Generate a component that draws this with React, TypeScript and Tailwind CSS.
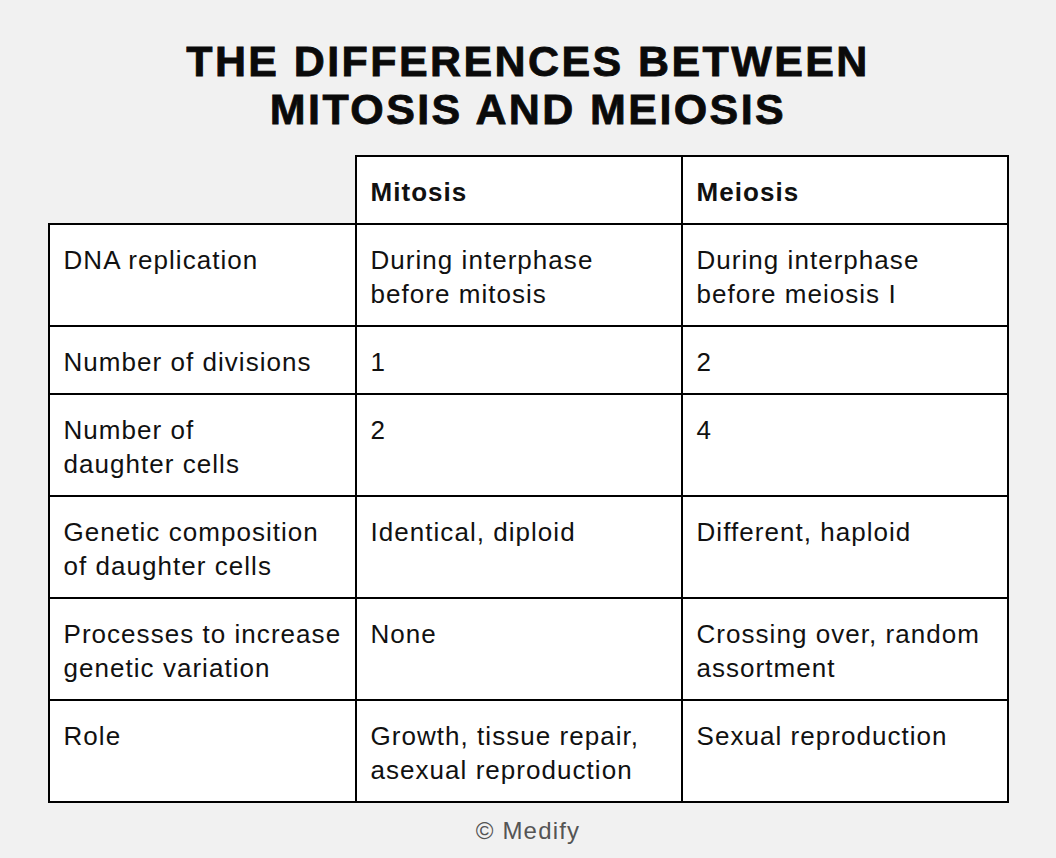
const rows: string[][][] = [
  [['DNA replication'], ['During interphase', 'before mitosis'], ['During interphase', 'before meiosis I']],
  [['Number of divisions'], ['1'], ['2']],
  [['Number of', 'daughter cells'], ['2'], ['4']],
  [['Genetic composition', 'of daughter cells'], ['Identical, diploid'], ['Different, haploid']],
  [['Processes to increase', 'genetic variation'], ['None'], ['Crossing over, random', 'assortment']],
  [['Role'], ['Growth, tissue repair,', 'asexual reproduction'], ['Sexual reproduction']],
];

const rowHeights = ['h-[102px]', 'h-[68px]', 'h-[102px]', 'h-[102px]', 'h-[102px]', 'h-[104px]'];

function Cell({ lines, col, last, height }: { lines: string[]; col: number; last: boolean; height: string }) {
  return (
    <div
      className={`${height} border-l-2 border-t-2 border-black bg-white pl-[14px] pt-[18px] whitespace-nowrap ${col === 2 ? 'border-r-2' : ''} ${last ? 'border-b-2' : ''}`}
    >
      {lines.map((line, i) => (
        <div key={i}>{line}</div>
      ))}
    </div>
  );
}

export default function App() {
  return (
    <div className="w-[1056px] h-[858px] bg-[#f1f1f1] text-[#111] font-['Liberation_Sans',Arial,sans-serif] flex flex-col items-center pt-[37px]">
      {/* Title */}
      <h1 className="text-center text-[43px] leading-[48px] font-bold tracking-[2.4px] text-[#0a0a0a] [-webkit-text-stroke:0.8px_#0a0a0a]">
        THE DIFFERENCES BETWEEN
        <br />
        MITOSIS AND MEIOSIS
      </h1>

      {/* Table */}
      <div className="mt-[22px] grid grid-cols-[307px_326px_328px] text-[26px] leading-[34px] tracking-[0.04em]">
        <div className="h-[68px]" />
        <div className="h-[68px] border-l-2 border-t-2 border-black bg-white pl-[14px] pt-[18px] font-bold">Mitosis</div>
        <div className="h-[68px] border-l-2 border-t-2 border-r-2 border-black bg-white pl-[14px] pt-[18px] font-bold">Meiosis</div>
        {rows.map((row, r) =>
          row.map((lines, c) => (
            <Cell key={`${r}-${c}`} lines={lines} col={c} last={r === rows.length - 1} height={rowHeights[r]} />
          ))
        )}
      </div>

      {/* Footer */}
      <div className="mt-[14px] text-[24px] leading-[28px] tracking-[0.05em] text-[#555]">© Medify</div>
    </div>
  );
}
